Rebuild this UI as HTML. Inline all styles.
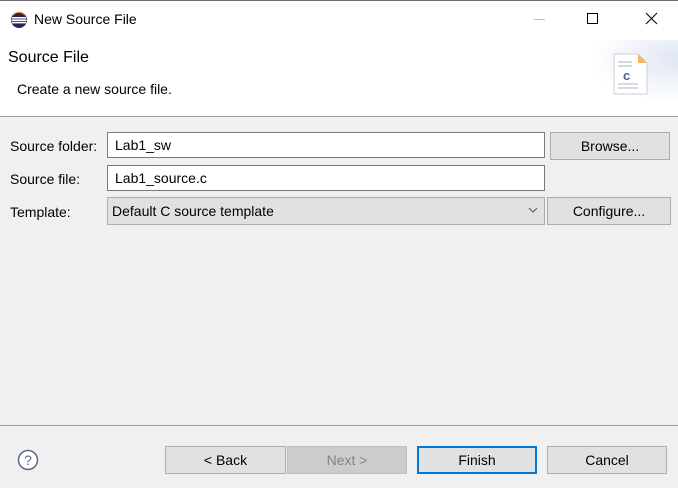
<!DOCTYPE html>
<html><head><style>
*{box-sizing:border-box;margin:0;padding:0}
body{width:678px;height:488px;background:#f0f0f0;font-family:"Liberation Sans",sans-serif;font-size:14px;color:#000;position:relative;overflow:hidden}
.a{position:absolute}
.top{left:0;top:0;width:678px;height:117px;background:#fff;border-top:1px solid #6e6e6e;border-bottom:1px solid #a0a0a0}
.inp{background:#fff;border:1px solid #7a7a7a;padding:4px 0 0 7px;height:26px}
.btn{background:#e1e1e1;border:1px solid #adadad;text-align:center;line-height:26px;height:28px}
.lbl{left:10px}
</style></head><body>
<div class="a top"></div>
<svg class="a" style="left:10px;top:11px" width="18" height="18" viewBox="0 0 18 18"><circle cx="9" cy="9" r="8" fill="#2c2255"/><rect x="2" y="6" width="14" height="1.6" fill="#fff"/><rect x="1.5" y="8.4" width="15" height="1.6" fill="#fff"/><rect x="2" y="10.8" width="14" height="1.6" fill="#fff"/><path d="M3 4a8 8 0 0 1 12 0" stroke="#f7941e" stroke-width="1.2" fill="none"/></svg>
<div class="a" style="left:34px;top:11px;font-size:14px">New Source File</div>
<div class="a" style="left:534px;top:19px;width:11px;height:1px;background:#bbb"></div>
<div class="a" style="left:587px;top:13px;width:11px;height:11px;border:1px solid #000"></div>
<svg class="a" style="left:645px;top:12px" width="13" height="13"><path d="M1 1L12 12M12 1L1 12" stroke="#000" stroke-width="1"/></svg>
<div class="a" style="left:8px;top:49px;font-size:16px">Source File</div>
<div class="a" style="left:17px;top:81px">Create a new source file.</div>
<div class="a" style="left:590px;top:40px;width:88px;height:64px;background:radial-gradient(ellipse at 100% 30%,#dfe6f3 0%,#fff 70%)"></div>
<svg class="a" style="left:612px;top:52px" width="38" height="44" viewBox="0 0 38 44"><path d="M2 2H26L35 11V42H2Z" fill="#fff" stroke="#c9d0d8"/><path d="M26 2V11H35Z" fill="#f5b860"/><path d="M6 10h14M6 14h14M6 32h20M6 36h20" stroke="#aab4c0"/><text x="11" y="28" font-family="Liberation Sans" font-weight="bold" font-size="13" fill="#4d6486">c</text></svg>
<div class="a lbl" style="top:138px">Source folder:</div>
<div class="a inp" style="left:107px;top:132px;width:438px">Lab1_sw</div>
<div class="a btn" style="left:550px;top:132px;width:120px">Browse...</div>
<div class="a lbl" style="top:171px">Source file:</div>
<div class="a inp" style="left:107px;top:165px;width:438px">Lab1_source.c</div>
<div class="a lbl" style="top:204px">Template:</div>
<div class="a inp" style="left:107px;top:197px;width:438px;height:28px;background:#e1e1e1;border-color:#adadad;padding:5px 0 0 4px">Default C source template</div>
<svg class="a" style="left:528px;top:207px" width="10" height="6"><path d="M1 1L5 5L9 1" stroke="#555" fill="none"/></svg>
<div class="a btn" style="left:547px;top:197px;width:124px">Configure...</div>
<div class="a" style="left:0;top:425px;width:678px;height:1px;background:#a0a0a0"></div>
<svg class="a" style="left:17px;top:449px" width="22" height="22"><circle cx="11" cy="11" r="9.5" fill="#fff" stroke="#5a6a86" stroke-width="1.5"/><text x="11" y="16" text-anchor="middle" font-family="Liberation Sans" font-size="14" fill="#5a6a86">?</text></svg>
<div class="a btn" style="left:165px;top:446px;width:121px">&lt; Back</div>
<div class="a btn" style="left:287px;top:446px;width:120px;background:#ccc;border-color:#bfbfbf;color:#838383">Next &gt;</div>
<div class="a btn" style="left:417px;top:446px;width:120px;border:2px solid #0078d7;line-height:24px">Finish</div>
<div class="a btn" style="left:547px;top:446px;width:120px">Cancel</div>
</body></html>
